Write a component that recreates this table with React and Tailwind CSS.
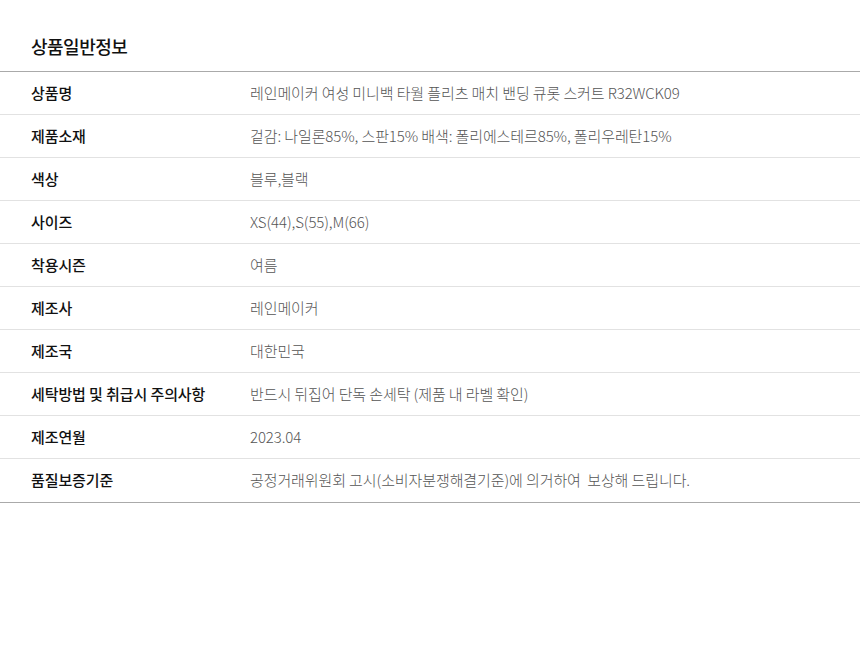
import React from 'react';

const rows = [
  ['상품명', '레인메이커 여성 미니백 타월 플리츠 매치 밴딩 큐롯 스커트 R32WCK09'],
  ['제품소재', '겉감: 나일론85%, 스판15% 배색: 폴리에스테르85%, 폴리우레탄15%'],
  ['색상', '블루,블랙'],
  ['사이즈', 'XS(44),S(55),M(66)'],
  ['착용시즌', '여름'],
  ['제조사', '레인메이커'],
  ['제조국', '대한민국'],
  ['세탁방법 및 취급시 주의사항', '반드시 뒤집어 단독 손세탁 (제품 내 라벨 확인)'],
  ['제조연월', '2023.04'],
  ['품질보증기준', '공정거래위원회 고시(소비자분쟁해결기준)에 의거하여  보상해 드립니다.'],
];

export default function App() {
  return (
    <div className="min-h-screen bg-white font-['Noto_Sans_CJK_KR','Noto_Sans',sans-serif]">
      <h2 className="pl-[31px] pt-[34px] pb-[12px] text-[18px] leading-[25px] font-medium text-[#111] tracking-[-0.5px]">
        상품일반정보
      </h2>
      <div className="border-t border-b border-[#aaaaaa]">
        {rows.map(([label, value], i) => (
          <div
            key={label}
            className={`flex items-center h-[43px] ${i < rows.length - 1 ? 'border-b border-[#e2e2e2]' : ''}`}
          >
            <div className="w-[250px] shrink-0 pl-[31px] text-[15px] font-medium text-[#111] tracking-[-0.1px]">
              {label}
            </div>
            <div className="text-[15px] font-light text-[#555] tracking-[-0.1px] whitespace-pre">
              {value}
            </div>
          </div>
        ))}
      </div>
    </div>
  );
}
